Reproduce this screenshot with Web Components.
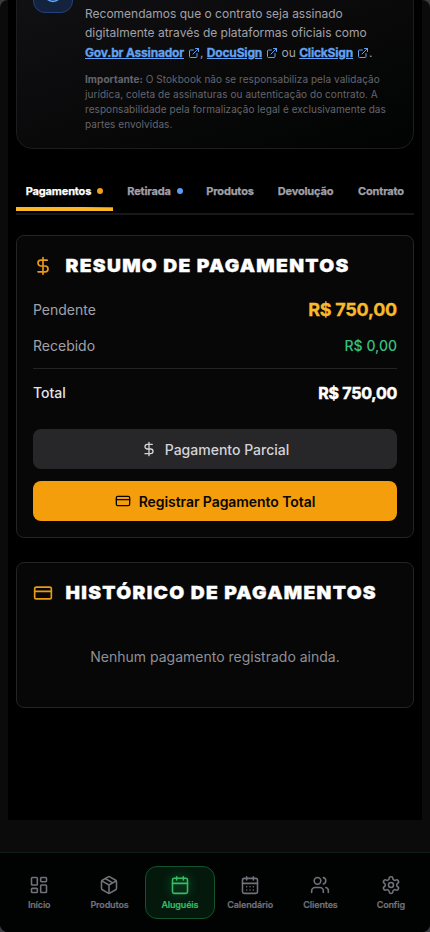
<!DOCTYPE html>
<html lang="pt-BR">
<head>
<meta charset="utf-8">
<title>Stokbook</title>
<style>
html{background:#3b3c3e}
body{margin:0;width:430px;height:932px;overflow:hidden;font-family:Inter,"Liberation Sans",sans-serif;color:#fff}
</style>
</head>
<body>
<rental-page></rental-page>
<script>
const ICONS={
dollar:'<path d="M12 2v20M17 5H9.500a3.500 3.500 0 0 0 0 7h5a3.500 3.500 0 0 1 0 7H6"/>',
card:'<rect x="2" y="5" width="20" height="14" rx="2"/><path d="M2 10h20"/>',
link:'<path d="M15 3h6v6M10 14 21 3M18 13v6a2 2 0 0 1-2 2H5a2 2 0 0 1-2-2V8a2 2 0 0 1 2-2h6"/>',
info:'<circle cx="12" cy="12" r="10"/><path d="M12 16v-4M12 8h.01"/>',
home:'<rect x="3" y="3" width="7" height="9" rx="1"/><rect x="14" y="3" width="7" height="5" rx="1"/><rect x="14" y="12" width="7" height="9" rx="1"/><rect x="3" y="16" width="7" height="5" rx="1"/>',
box:'<path d="M21 8a2 2 0 0 0-1-1.730l-7-4a2 2 0 0 0-2 0l-7 4A2 2 0 0 0 3 8v8a2 2 0 0 0 1 1.730l7 4a2 2 0 0 0 2 0l7-4A2 2 0 0 0 21 16Z"/><path d="m3.300 7 8.700 5 8.700-5M12 22V12M7.500 4.270l9 5.150"/>',
calendar:'<path d="M8 2v4M16 2v4M3 10h18"/><rect x="3" y="4" width="18" height="18" rx="2"/>',
days:'<path d="M8 2v4M16 2v4M3 10h18M8 14h.01M12 14h.01M16 14h.01M8 18h.01M12 18h.01M16 18h.01"/><rect x="3" y="4" width="18" height="18" rx="2"/>',
users:'<path d="M16 21v-2a4 4 0 0 0-4-4H6a4 4 0 0 0-4 4v2"/><circle cx="9" cy="7" r="4"/><path d="M22 21v-2a4 4 0 0 0-3-3.870M16 3.130a4 4 0 0 1 0 7.750"/>',
gear:'<path d="M12.220 2h-.44a2 2 0 0 0-2 2v.18a2 2 0 0 1-1 1.730l-.43.25a2 2 0 0 1-2 0l-.15-.08a2 2 0 0 0-2.730.73l-.22.38a2 2 0 0 0 .73 2.730l.15.1a2 2 0 0 1 1 1.720v.51a2 2 0 0 1-1 1.740l-.15.09a2 2 0 0 0-.73 2.730l.22.38a2 2 0 0 0 2.730.73l.15-.08a2 2 0 0 1 2 0l.43.25a2 2 0 0 1 1 1.730V20a2 2 0 0 0 2 2h.44a2 2 0 0 0 2-2v-.18a2 2 0 0 1 1-1.730l.43-.25a2 2 0 0 1 2 0l.15.08a2 2 0 0 0 2.730-.73l.22-.39a2 2 0 0 0-.73-2.730l-.15-.08a2 2 0 0 1-1-1.740v-.5a2 2 0 0 1 1-1.740l.15-.09a2 2 0 0 0 .73-2.730l-.22-.38a2 2 0 0 0-2.730-.73l-.15.08a2 2 0 0 1-2 0l-.43-.25a2 2 0 0 1-1-1.730V4a2 2 0 0 0-2-2z"/><circle cx="12" cy="12" r="3"/>'
};
function define(name,render){
  customElements.define(name,class extends HTMLElement{
    connectedCallback(){
      if(this.shadowRoot)return;
      this.attachShadow({mode:'open'}).innerHTML=render(this);
    }
  });
}
define('ui-icon',e=>`<style>:host{display:inline-flex;flex:none;width:var(--size,20px);height:var(--size,20px)}svg{width:100%;height:100%;fill:none;stroke:currentColor;stroke-width:${e.getAttribute('stroke')||2};stroke-linecap:round;stroke-linejoin:round}</style><svg viewBox="0 0 24 24">${ICONS[e.getAttribute('name')]}</svg>`);
define('ext-link',()=>`<style>:host{display:inline;color:#61a2f2;white-space:nowrap}a{font-weight:700;text-decoration:underline;letter-spacing:-.185px;-webkit-text-stroke:.3px}ui-icon{--size:12px;vertical-align:-2px;margin-left:4px}</style><a><slot></slot></a><ui-icon name="link"></ui-icon>`);
define('notice-card',()=>`<style>
:host{display:flex;box-sizing:border-box;height:194px;margin-top:-45px;padding:17px 16px 0;gap:12px;border:1px solid #1d1d20;border-radius:16px;background:linear-gradient(160deg,#131316,#09090a 58%,#020303 95%)}
.badge{box-sizing:border-box;flex:none;width:40px;height:40px;border:1px solid #20437c;border-radius:12px;background:#13233d;color:#61a2f2;display:grid;place-items:center}
.badge ui-icon{--size:20px}
.body{padding-top:30.500px;white-space:nowrap}
p{margin:0;font-size:12px;line-height:19.500px;color:#a1a1aa}
small{display:block;margin-top:9.500px;font-size:10px;line-height:15px;color:#65656d;letter-spacing:.06px}
</style><div class="badge"><ui-icon name="info"></ui-icon></div><div class="body"><p><slot></slot></p><small><slot name="note"></slot></small></div>`);
define('tab-bar',()=>`<style>:host{display:grid;grid-template-columns:97px 76px 66px 77px 66px;gap:4px;box-sizing:border-box;width:398px;height:45px;margin-top:21px;border-bottom:2px solid #18181b}</style><slot></slot>`);
define('tab-item',()=>`<style>
:host{position:relative;display:flex;align-items:center;justify-content:center;gap:6px;height:42px;font-size:11px;font-weight:700;letter-spacing:-.15px;-webkit-text-stroke:.25px;color:#a1a1aa;white-space:nowrap}
:host([active]){color:#fff}
:host([active])::after{content:"";position:absolute;left:0;right:0;bottom:1px;height:4px;background:linear-gradient(to top right,#fbb822 0 72%,#b87812 88%) 0 0/100% 2px no-repeat,#fbb822}
:host([dot])::before{content:"";order:2;width:6px;height:6px;border-radius:50%;background:var(--dot)}
</style><slot></slot>`);
define('panel-card',e=>`<style>
:host{display:block;box-sizing:border-box;border:1px solid #242427;border-radius:8px;background:#070707;padding:16px}
header{display:flex;align-items:center;gap:12px;height:28px}
header ui-icon{color:#e99a17;--size:20px}
h2{margin:0;font:900 17.500px/28px Inter,sans-serif;letter-spacing:1.2px;-webkit-text-stroke:.35px;transform:translateX(.5px) scaleX(1.1);transform-origin:0 50%;white-space:nowrap}
</style><header><ui-icon name="${e.getAttribute('icon')}"></ui-icon><h2>${e.getAttribute('heading')}</h2></header><slot></slot>`);
define('amount-row',()=>`<style>
:host{display:flex;align-items:center;justify-content:space-between;height:28px;font-size:14px;line-height:20px;color:#a1a1aa}
b{font-weight:500;color:#34c17f}
:host([kind=pending]) b{font-size:18px;font-weight:700;color:#f8b92a;letter-spacing:-.25px;-webkit-text-stroke:.3px}
:host([kind=total]){color:#e4e4e7;font-weight:500}
:host([kind=total]) b{font-size:16px;font-weight:700;color:#fff;letter-spacing:-.25px;-webkit-text-stroke:.5px}
</style><slot></slot><b><slot name="value"></slot></b>`);
define('action-button',e=>`<style>
:host{display:flex;align-items:center;justify-content:center;height:40px;border-radius:8px;background:#27272a;color:#d4d4d8;font-size:14px;font-weight:500}
:host([primary]){background:#f59e0b;color:#0a0600;font-weight:600;letter-spacing:-.07px}
ui-icon{--size:16px;margin-right:8px}
</style><ui-icon name="${e.getAttribute('icon')}"></ui-icon><slot></slot>`);
define('nav-item',e=>`<style>
:host{display:flex;flex-direction:column;align-items:center;box-sizing:border-box;height:53px;padding-top:8px;border:1px solid transparent;border-radius:12px;color:#71717a;font-size:9px;line-height:12px;font-weight:600;letter-spacing:-.16px;-webkit-text-stroke:.2px;gap:4px}
:host([active]){background:#04190c;border-color:#14532d;color:#34bd66}
:host([active]) ui-icon{filter:drop-shadow(0 0 5px #16743b)}
ui-icon{--size:20px}
</style><ui-icon stroke="1.9" name="${e.getAttribute('icon')}"></ui-icon><slot></slot>`);
define('bottom-nav',()=>`<style>:host{display:grid;grid-template-columns:repeat(6,1fr);box-sizing:border-box;height:80px;border-top:1px solid #0e1b17;background:#010202;padding:13px 4px 0;}</style><slot></slot>`);
define('rental-page',()=>`<style>
:host{display:flex;flex-direction:column;width:430px;height:932px;overflow:hidden;border-radius:8px;background:#0b0b0b}
main{box-sizing:border-box;height:820px;flex:none;margin:0 8px;padding:0 8px;background:#000;overflow:hidden}
.spacer{flex:1}
.summary{height:303px;margin-top:20px}
.history{height:146px;margin-top:24px}
.pending{margin-top:16px}.received{margin-top:8px}
.total{border-top:1px solid #242427;margin-top:8px;padding-top:10px}
.part{margin-top:22px}.full{margin-top:12px}
.empty{margin:40px 0 0;text-align:center;font-size:14px;line-height:20px;color:#8f8f96}
</style>
<main>
<notice-card>Recomendamos que o contrato seja assinado<br>digitalmente através de plataformas oficiais como<br><ext-link>Gov.br Assinador</ext-link>, <ext-link>DocuSign</ext-link> ou <ext-link>ClickSign</ext-link>.<span slot="note"><b>Importante:</b> O Stokbook não se responsabiliza pela validação<br>jurídica, coleta de assinaturas ou autenticação do contrato. A<br>responsabilidade pela formalização legal é exclusivamente das<br>partes envolvidas.</span></notice-card>
<tab-bar>
<tab-item active dot style="--dot:#f0a020">Pagamentos</tab-item><tab-item dot style="--dot:#579df5">Retirada</tab-item><tab-item>Produtos</tab-item><tab-item>Devolução</tab-item><tab-item>Contrato</tab-item>
</tab-bar>
<panel-card class="summary" icon="dollar" heading="RESUMO DE PAGAMENTOS">
<amount-row class="pending" kind="pending">Pendente<span slot="value">R$ 750,00</span></amount-row>
<amount-row class="received">Recebido<span slot="value">R$ 0,00</span></amount-row>
<amount-row class="total" kind="total">Total<span slot="value">R$ 750,00</span></amount-row>
<action-button class="part" icon="dollar">Pagamento Parcial</action-button>
<action-button class="full" primary icon="card">Registrar Pagamento Total</action-button>
</panel-card>
<panel-card class="history" icon="card" heading="HISTÓRICO DE PAGAMENTOS"><p class="empty">Nenhum pagamento registrado ainda.</p></panel-card>
</main>
<div class="spacer"></div>
<bottom-nav>
<nav-item icon="home">Início</nav-item><nav-item icon="box">Produtos</nav-item><nav-item active icon="calendar">Aluguéis</nav-item><nav-item icon="days">Calendário</nav-item><nav-item icon="users">Clientes</nav-item><nav-item icon="gear">Config</nav-item>
</bottom-nav>`);
</script>
</body>
</html>
